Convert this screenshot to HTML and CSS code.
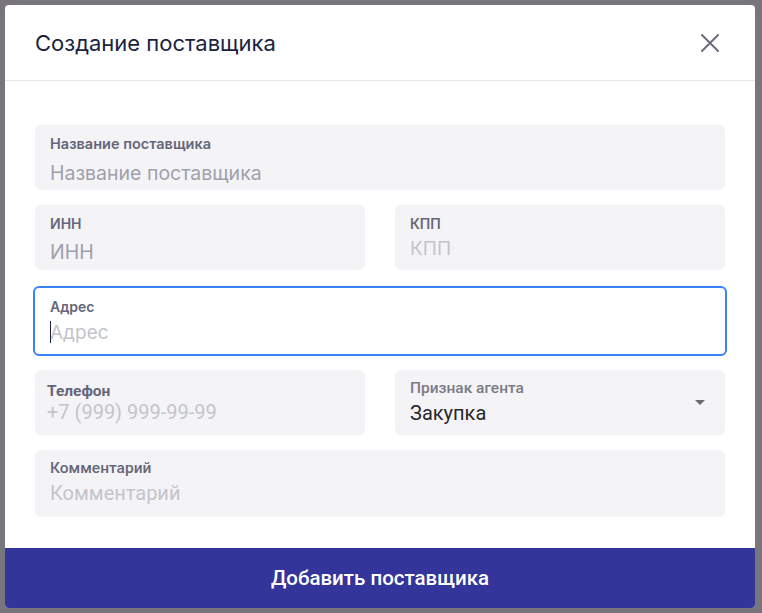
FILE: index.html
```html
<!DOCTYPE html>
<html lang="ru">
<head>
  <meta charset="UTF-8">
  <title>Создание поставщика</title>
  <link rel="stylesheet" href="styles.css">
</head>
<body>

<div class="modal">
  <header class="modal-header">
    <h2 class="modal-title">Создание поставщика</h2>
    <button class="close-btn" aria-label="Закрыть">
      <svg width="20" height="20" viewBox="0 0 20 20">
        <path d="M2 2 L18 18 M18 2 L2 18" stroke="currentColor" stroke-width="2" stroke-linecap="round"/>
      </svg>
    </button>
  </header>

  <form class="modal-body">
    <label class="field name">
      <span class="field-label">Название поставщика</span>
      <input class="field-input" type="text" placeholder="Название поставщика">
    </label>

    <div class="row">
      <label class="field inn">
        <span class="field-label">ИНН</span>
        <input class="field-input" type="text" placeholder="ИНН">
      </label>
      <label class="field light kpp">
        <span class="field-label">КПП</span>
        <input class="field-input" type="text" placeholder="КПП">
      </label>
    </div>

    <label class="field light focused">
      <span class="field-label">Адрес</span>
      <span class="input-wrap">
        <span class="caret"></span>
        <input class="field-input" type="text" placeholder="Адрес">
      </span>
    </label>

    <div class="row">
      <label class="field light roboto phone">
        <span class="field-label">Телефон</span>
        <input class="field-input" type="tel" placeholder="+7 (999) 999-99-99">
      </label>
      <label class="field roboto select">
        <span class="field-label">Признак агента</span>
        <span class="select-value">Закупка</span>
        <span class="select-arrow"></span>
      </label>
    </div>

    <label class="field light roboto comment">
      <span class="field-label">Комментарий</span>
      <input class="field-input" type="text" placeholder="Комментарий">
    </label>
  </form>

  <button class="submit-btn">Добавить поставщика</button>
</div>

</body>
</html>
```

FILE: styles.css
```css
* {
  margin: 0;
  padding: 0;
  box-sizing: border-box;
}

body {
  font-family: 'Inter', sans-serif;
  background-color: #79757d;
  padding: 5px;
  height: 100vh;
  overflow: hidden;
}

.modal {
  width: 750px;
  height: 603px;
  background-color: #fff;
  border-radius: 4px;
  display: flex;
  flex-direction: column;
  overflow: hidden;
}

.modal-header {
  height: 76px;
  padding: 0 35px 0 30px;
  display: flex;
  justify-content: space-between;
  align-items: center;
  border-bottom: 1px solid #e6e6ea;
}

.modal-title {
  font-size: 22px;
  font-weight: 400;
  color: #1b2340;
}

.close-btn {
  background: none;
  border: none;
  color: #6f6a80;
  cursor: pointer;
  display: flex;
  margin-top: 1px;
}

.modal-body {
  padding: 44px 30px 31px;
  display: flex;
  flex-direction: column;
  gap: 15px;
}

.row {
  display: grid;
  grid-template-columns: 1fr 1fr;
  gap: 30px;
}

/* base field */
.field {
  height: 65px;
  padding: 11px 15px 0;
  background-color: #f4f4f6;
  border-radius: 6px;
  display: flex;
  flex-direction: column;
  position: relative;
}

.field-label {
  font-size: 14px;
  font-weight: 600;
  color: #66667a;
  line-height: 16px;
}

.field-input {
  border: none;
  outline: none;
  background: transparent;
  font-family: inherit;
  font-size: 19.5px;
  color: #2a2a33;
  height: 28px;
  margin-top: 6px;
  width: 100%;
}

.field-input::placeholder {
  color: #9fa0ac;
}

.field.name .field-label {
  font-size: 14.5px;
}

.field.name .field-input {
  margin-top: 7px;
}

.field.light .field-input {
  font-size: 19px;
  margin-top: 2px;
}

.field.light .field-input::placeholder {
  color: #c4c4ca;
}

/* focused address */
.field.focused {
  height: 70px;
  margin: 1px -2px -1px;
  padding: 11px 15px 0;
  background-color: #fff;
  border: 2px solid #3a82f6;
}

.field.focused .field-input {
  margin-top: 3px;
}

.input-wrap {
  position: relative;
  display: flex;
}

.caret {
  position: absolute;
  left: 0;
  top: 6px;
  width: 1px;
  height: 22px;
  background-color: #1b2340;
}

/* roboto fields */
.field.roboto {
  font-family: 'Roboto', sans-serif;
}

.field.roboto .field-label {
  font-size: 15.5px;
  line-height: 18px;
}

.field.roboto .field-input {
  font-size: 20px;
  height: 24px;
}

.field.phone {
  padding: 12px 12px 0;
}

.field.phone .field-label {
  font-weight: 700;
}

.field.phone .field-input {
  margin-top: 0;
}

.field.select {
  padding: 9px 15px 0;
}

.field.select .field-label {
  font-weight: 500;
  color: #7a7a86;
}

.select-value {
  font-size: 20px;
  color: #27272f;
  line-height: 26px;
  margin-top: 3px;
}

.select-arrow {
  position: absolute;
  right: 20px;
  top: 30px;
  width: 0;
  height: 0;
  border-left: 5px solid transparent;
  border-right: 5px solid transparent;
  border-top: 5px solid #6b6b75;
}

.field.comment {
  height: 67px;
  padding: 9px 15px 0;
}

.field.comment .field-label {
  font-weight: 500;
}

.field.comment .field-input {
  margin-top: 4px;
}

.submit-btn {
  height: 60px;
  background-color: #33359a;
  color: #fff;
  border: none;
  font-family: 'Roboto', sans-serif;
  font-size: 20.5px;
  font-weight: 500;
  cursor: pointer;
  margin-top: auto;
}
```
